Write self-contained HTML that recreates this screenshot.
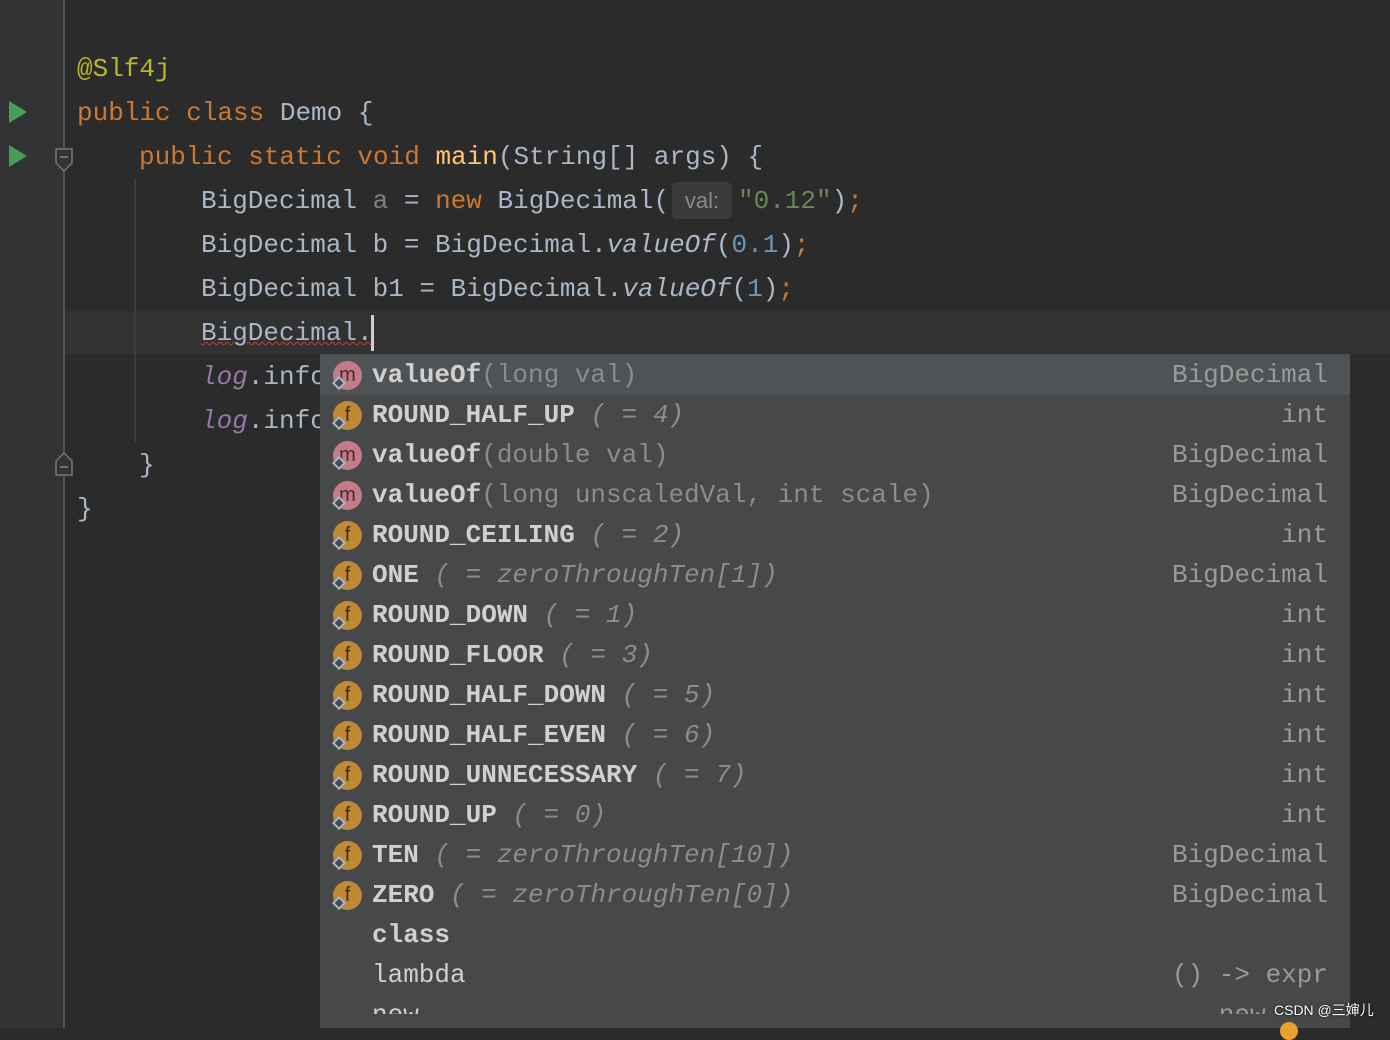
<!DOCTYPE html>
<html><head><meta charset="utf-8"><style>
*{margin:0;padding:0;box-sizing:border-box}
body{width:1390px;height:1028px;background:#2b2b2b;overflow:hidden;position:relative;font-family:"Liberation Mono","DejaVu Sans Mono",monospace;font-size:26px;color:#a9b7c6}
.gut{position:absolute;left:0;top:0;width:64px;height:1028px;background:#313335}
.gl{position:absolute;left:63px;top:0;width:2px;height:1028px;background:#555}
.cur{position:absolute;left:65px;top:311px;width:1325px;height:43px;background:#323232}
.ln{position:absolute;white-space:pre;line-height:44px;height:44px}
.k{color:#cc7832}.an{color:#bbb529}.fn{color:#ffc66d}.n{color:#6897bb}.s{color:#6a8759}.i{font-style:italic}.lg{color:#9876aa;font-style:italic}.gr{color:#808080}
.pop{position:absolute;left:320px;top:354px;width:1030px;height:674px;background:#46484a}
.clip{position:absolute;left:0;top:0;width:1030px;height:660px;overflow:hidden}
.row{position:absolute;left:0;width:1030px;height:40px;line-height:40px;white-space:pre}
.row.sel{background:#4f5356}
.nm{position:absolute;left:52px;font-weight:bold;color:#d0d0d0}
.h{font-weight:normal;color:#8c8c8c;font-style:italic}
.ty{position:absolute;right:22px;color:#9a9a9a}
.ic{position:absolute;left:13px;top:6px;width:29px;height:29px;border-radius:50%;font-size:20px;line-height:28px;text-align:center;color:#3a2a10;font-family:"Liberation Sans",sans-serif}
.m{background:#c47b87;color:#4a2a30}.f{background:#c08a35}
.lk{position:absolute;left:14px;top:23px;width:10px;height:10px;border:2px solid #a8b8c8;transform:rotate(45deg);background:#46484a}
.tri{position:absolute;left:9px;width:0;height:0;border-left:18px solid #499c54;border-top:11px solid transparent;border-bottom:11px solid transparent}
</style></head><body>
<div class="gut"></div><div class="gl"></div>
<div class="cur"></div>
<div class="tri" style="top:101px"></div>
<div class="tri" style="top:145px"></div>
<svg style="position:absolute;left:54px;top:147px" width="20" height="26"><path d="M2 2H18V16L10 24L2 16Z" fill="#313335" stroke="#777" stroke-width="1.5"/><path d="M6 10H14" stroke="#888" stroke-width="1.5"/></svg>
<svg style="position:absolute;left:54px;top:451px" width="20" height="26"><path d="M2 24H18V10L10 2L2 10Z" fill="#313335" stroke="#777" stroke-width="1.5"/><path d="M6 16H14" stroke="#888" stroke-width="1.5"/></svg>
<div style="position:absolute;left:134px;top:178px;width:2px;height:264px;background:#3b3b3b"></div>
<div class="ln an" style="left:77px;top:47px">@Slf4j</div>
<div class="ln" style="left:77px;top:91px"><span class="k">public class </span>Demo {</div>
<div class="ln" style="left:139px;top:135px"><span class="k">public static void </span><span class="fn">main</span>(String[] args) {</div>
<div class="ln" style="left:201px;top:179px">BigDecimal <span class="gr">a</span> = <span class="k">new </span>BigDecimal(</div>
<div style="position:absolute;left:672px;top:182px;width:60px;height:37px;background:#3b3b3b;border-radius:6px;color:#8a8a8a;font-family:'Liberation Sans',sans-serif;font-size:22px;line-height:37px;text-align:center">val:</div>
<div class="ln" style="left:738px;top:179px"><span class="s">"0.12"</span>)<span class="k">;</span></div>
<div class="ln" style="left:201px;top:223px">BigDecimal b = BigDecimal.<span class="i">valueOf</span>(<span class="n">0.1</span>)<span class="k">;</span></div>
<div class="ln" style="left:201px;top:267px">BigDecimal b1 = BigDecimal.<span class="i">valueOf</span>(<span class="n">1</span>)<span class="k">;</span></div>
<div class="ln" style="left:201px;top:311px;text-decoration:underline wavy #bc3f3c;text-decoration-thickness:1px">BigDecimal.</div>
<div style="position:absolute;left:371px;top:315px;width:3px;height:36px;background:#d0d0d0"></div>
<div class="ln" style="left:201px;top:355px"><span class="lg">log</span>.info</div>
<div class="ln" style="left:201px;top:399px"><span class="lg">log</span>.info</div>
<div class="ln" style="left:139px;top:443px">}</div>
<div class="ln" style="left:77px;top:487px">}</div>
<div class="pop"><div class="clip">
<div class="row sel" style="top:1px"><div class="ic m">m</div><div class="lk"></div><span class="nm">valueOf<span style="font-weight:normal;color:#8c8c8c">(long val)</span></span><span class="ty">BigDecimal</span></div>
<div class="row" style="top:41px"><div class="ic f">f</div><div class="lk"></div><span class="nm">ROUND_HALF_UP<span class="h"> ( = 4)</span></span><span class="ty">int</span></div>
<div class="row" style="top:81px"><div class="ic m">m</div><div class="lk"></div><span class="nm">valueOf<span style="font-weight:normal;color:#8c8c8c">(double val)</span></span><span class="ty">BigDecimal</span></div>
<div class="row" style="top:121px"><div class="ic m">m</div><div class="lk"></div><span class="nm">valueOf<span style="font-weight:normal;color:#8c8c8c">(long unscaledVal, int scale)</span></span><span class="ty">BigDecimal</span></div>
<div class="row" style="top:161px"><div class="ic f">f</div><div class="lk"></div><span class="nm">ROUND_CEILING<span class="h"> ( = 2)</span></span><span class="ty">int</span></div>
<div class="row" style="top:201px"><div class="ic f">f</div><div class="lk"></div><span class="nm">ONE<span class="h"> ( = zeroThroughTen[1])</span></span><span class="ty">BigDecimal</span></div>
<div class="row" style="top:241px"><div class="ic f">f</div><div class="lk"></div><span class="nm">ROUND_DOWN<span class="h"> ( = 1)</span></span><span class="ty">int</span></div>
<div class="row" style="top:281px"><div class="ic f">f</div><div class="lk"></div><span class="nm">ROUND_FLOOR<span class="h"> ( = 3)</span></span><span class="ty">int</span></div>
<div class="row" style="top:321px"><div class="ic f">f</div><div class="lk"></div><span class="nm">ROUND_HALF_DOWN<span class="h"> ( = 5)</span></span><span class="ty">int</span></div>
<div class="row" style="top:361px"><div class="ic f">f</div><div class="lk"></div><span class="nm">ROUND_HALF_EVEN<span class="h"> ( = 6)</span></span><span class="ty">int</span></div>
<div class="row" style="top:401px"><div class="ic f">f</div><div class="lk"></div><span class="nm">ROUND_UNNECESSARY<span class="h"> ( = 7)</span></span><span class="ty">int</span></div>
<div class="row" style="top:441px"><div class="ic f">f</div><div class="lk"></div><span class="nm">ROUND_UP<span class="h"> ( = 0)</span></span><span class="ty">int</span></div>
<div class="row" style="top:481px"><div class="ic f">f</div><div class="lk"></div><span class="nm">TEN<span class="h"> ( = zeroThroughTen[10])</span></span><span class="ty">BigDecimal</span></div>
<div class="row" style="top:521px"><div class="ic f">f</div><div class="lk"></div><span class="nm">ZERO<span class="h"> ( = zeroThroughTen[0])</span></span><span class="ty">BigDecimal</span></div>
<div class="row" style="top:561px"><span class="nm">class</span></div>
<div class="row" style="top:601px"><span class="nm" style="font-weight:normal">lambda</span><span class="ty">() -&gt; expr</span></div>
<div class="row" style="top:641px"><span class="nm" style="font-weight:normal">new</span><span class="ty">new ...</span></div>
</div></div>
<div style="position:absolute;left:1280px;top:1022px;width:18px;height:18px;border-radius:50%;background:#e8a030"></div>
<div style="position:absolute;left:1274px;top:1000px;color:#fff;font-family:'Liberation Sans','Noto Sans CJK SC',sans-serif;font-size:14px;text-shadow:0 0 2px #000">CSDN @三婶儿</div>
</body></html>
